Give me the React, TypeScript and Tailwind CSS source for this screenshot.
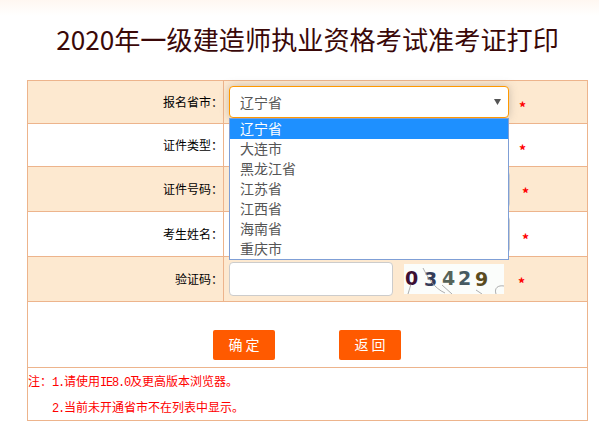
const options = ['辽宁省', '大连市', '黑龙江省', '江苏省', '江西省', '海南省', '重庆市'];
const cjk = { fontFamily: '"Noto Sans CJK SC", sans-serif' };

function Star({ className }: { className: string }) {
  return <span className={`text-[14px] font-bold leading-none text-[#ff0000] ${className}`}>*</span>;
}

function Row({ label, shaded, height, children }: { label: string; shaded?: boolean; height: string; children: React.ReactNode }) {
  return (
    <div className={`flex border-b border-[#edb48c] ${height} ${shaded ? 'bg-[#fde9d0]' : 'bg-white'}`}>
      <div className="flex w-[196px] shrink-0 items-center justify-end border-r border-[#edb48c] text-[12px] text-black">{label}</div>
      <div className="flex flex-1 items-center pl-[5px]">{children}</div>
    </div>
  );
}

function Captcha() {
  return (
    <svg viewBox="0 0 100 30" className="ml-[11px] h-[30px] w-[100px] bg-[#fbfdfb]">
      <g fontFamily="DejaVu Sans" fontWeight="700" fontSize="19">
        <text x="1" y="21" fill="#3c0f33">0</text>
        <text x="20" y="22" fill="#353c58">3</text>
        <text x="38" y="21" fill="#566358">4</text>
        <text x="54" y="21" fill="#465a62">2</text>
        <text x="71" y="22" fill="#5a4b1e">9</text>
      </g>
      <g fill="none" stroke="#999999" strokeWidth="0.8">
        <path d="M4 30 L7 20 M19 4 C24 14 30 24 41 29 M38 21 L48 30 M72 26 L78 30 M92 30 C90 24 94 21 100 22" />
      </g>
    </svg>
  );
}

function Box({ width = 'w-[281px]', height = 'h-[37px]' }: { width?: string; height?: string }) {
  return <div className={`${width} ${height} shrink-0 rounded-[4px] border border-[#cccccc] bg-white`} />;
}

function Button({ text }: { text: string }) {
  return (
    <div className="flex h-[30px] w-[62px] items-center justify-center rounded-[2px] bg-[#ff5a00] pb-[1px] text-[14px] text-white">{text}</div>
  );
}

function Latin({ children }: { children: string }) {
  return <span className="font-['Liberation_Mono'] leading-none tracking-[-1.2px]">{children}</span>;
}

export default function App() {
  return (
    <div className="h-[423px] w-[599px] overflow-hidden bg-[linear-gradient(#fff7f1,#ffffff_16px)]" style={cjk}>
      <h1 className="ml-[27px] flex h-[80px] w-[561px] items-center justify-center pb-[1px] text-[26.16px] font-normal text-[#3a0808]">
        2020年一级建造师执业资格考试准考证打印
      </h1>
      <div className="relative ml-[27px] w-[561px] border border-b-0 border-[#edb48c]">
        <Row label="报名省市：" shaded height="h-[43px]">
          <div className="relative h-[32px] w-[280px] shrink-0">
            <div className="flex h-full items-center justify-between rounded-[4px] border border-[#ff9900] bg-white pl-[10px] pr-[7px] text-[14px] text-[#555555] shadow-[0_0_8px_rgba(100,100,100,0.35)]">
              辽宁省
              <svg viewBox="0 0 7 6" className="h-[6px] w-[7px]"><path d="M0 0 H7 L3.5 6 Z" fill="#555555" /></svg>
            </div>
            <ul className="absolute left-0 top-full z-10 w-[280px] border border-[#7f9fd6] bg-white text-[14px] text-[#555555]">
              {options.map((name, i) => (
                <li key={name} className={`flex h-[20px] items-center pb-[2px] pl-[10px] ${i === 0 ? 'bg-[#1e90ff] text-white' : ''}`}>{name}</li>
              ))}
            </ul>
          </div>
          <Star className="ml-[10px] mt-[10px]" />
        </Row>
        <Row label="证件类型：" height="h-[43px]">
          <Box width="w-[280px]" height="h-[32px]" />
          <Star className="ml-[10px] mt-[10px]" />
        </Row>
        <Row label="证件号码：" shaded height="h-[45px]">
          <Box />
          <Star className="ml-[12px] mt-[8px]" />
        </Row>
        <Row label="考生姓名：" height="h-[45px]">
          <Box />
          <Star className="ml-[12px] mt-[10px]" />
        </Row>
        <Row label="验证码：" shaded height="h-[45px]">
          <Box width="w-[164px]" height="h-[34px]" />
          <Captcha />
          <Star className="ml-[14px] mt-[8px]" />
        </Row>
        <div className="flex h-[66px] gap-[64px] border-b border-[#edb48c] pl-[185px] pt-[28px]">
          <Button text="确 定" />
          <Button text="返 回" />
        </div>
        <div className="h-[53px] border-b border-[#edb48c] text-[12px] text-[#ff0000]">
          <p className="h-[26px] leading-[26px]">注：<Latin>1.</Latin>请使用<Latin>IE8.0</Latin>及更高版本浏览器。</p>
          <p className="h-[26px] pl-[24px] leading-[26px]"><Latin>2.</Latin>当前未开通省市不在列表中显示。</p>
        </div>
      </div>
    </div>
  );
}
